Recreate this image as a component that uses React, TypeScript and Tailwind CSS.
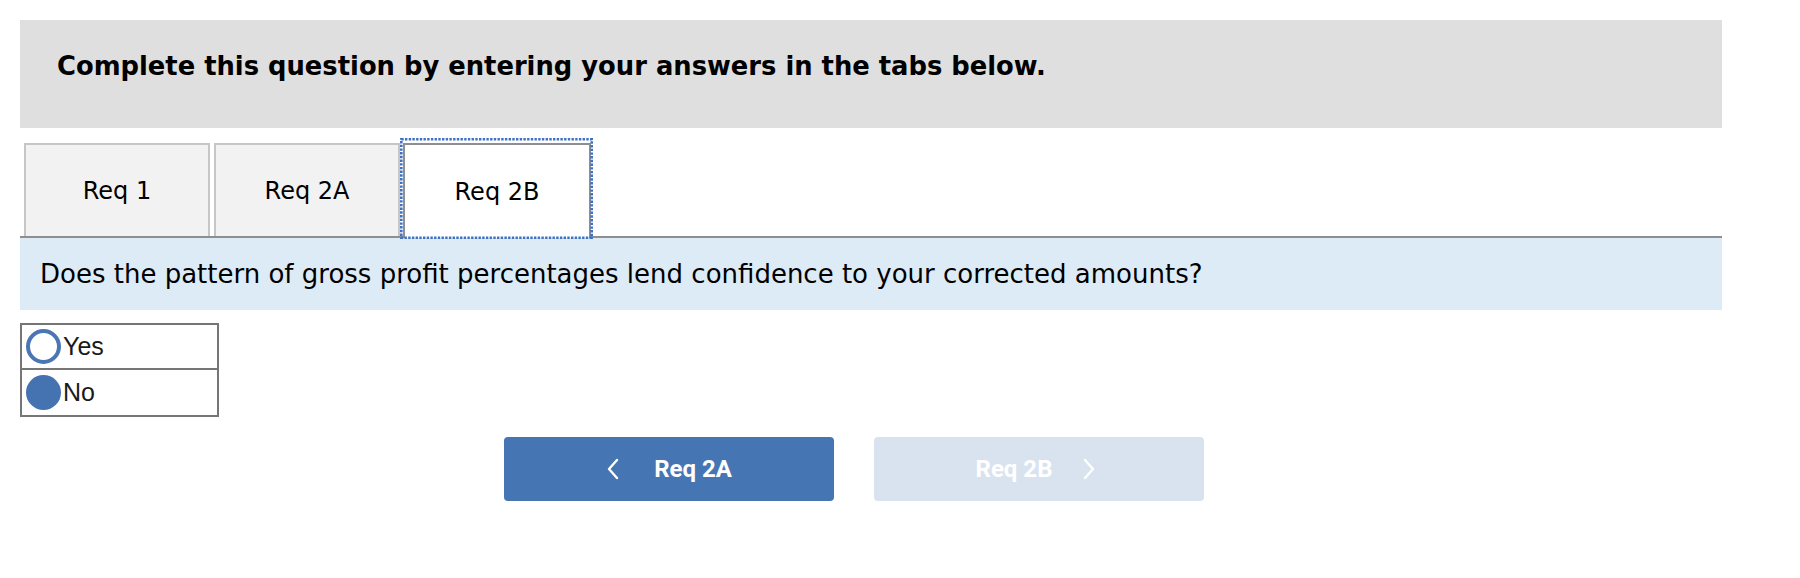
const tabs = [
  { label: "Req 1", active: false },
  { label: "Req 2A", active: false },
  { label: "Req 2B", active: true },
];

const ChevronLeft = () => (
  <svg width="14" height="24" viewBox="0 0 14 24" fill="none" stroke="currentColor" strokeWidth={2.4} strokeLinecap="round" strokeLinejoin="round">
    <path d="M11 3L3 12l8 9" />
  </svg>
);

const ChevronRight = () => (
  <svg width="14" height="24" viewBox="0 0 14 24" fill="none" stroke="currentColor" strokeWidth={2.4} strokeLinecap="round" strokeLinejoin="round">
    <path d="M3 3l8 9-8 9" />
  </svg>
);

// dotted focus ring around the selected tab
const FocusRing = () => (
  <svg className="absolute -left-[5px] -top-[7px] pointer-events-none" width="193" height="101">
    <rect x="1.3" y="1.3" width="190.4" height="98.4" fill="none" stroke="#3f70c2" strokeWidth={2.6} strokeDasharray="2.4 1.3" />
  </svg>
);

export default function App() {
  return (
    <div className="w-[1800px] h-[578px] bg-white pt-5 pl-5 font-['DejaVu_Sans',Verdana,sans-serif] text-black">
      <div className="w-[1702px]">
        <div className="h-[108px] bg-[#dfdfdf] pt-[31px] pl-[37px]">
          <h1 className="text-[25.8px] leading-[30px] font-bold">
            Complete this question by entering your answers in the tabs below.
          </h1>
        </div>

        <div className="mt-[15px] flex items-end h-[93px] pl-1">
          {tabs.map((t, i) =>
            t.active ? (
              <div
                key={t.label}
                className="ml-[3px] w-[188px] h-[95px] -mb-[2px] relative z-10 bg-white border-2 border-b-0 border-[#8f8f8f] flex items-center justify-center text-[24px]"
              >
                {t.label}
                <FocusRing />
              </div>
            ) : (
              <div
                key={t.label}
                className={`${i > 0 ? "ml-1" : ""} w-[186px] h-[93px] bg-[#f2f2f2] border-2 border-b-0 border-[#c6c6c6] flex items-center justify-center text-[24px]`}
              >
                {t.label}
              </div>
            )
          )}
        </div>

        <div className="border-t-2 border-[#8f8f8f] h-[74px] bg-[#ddebf7] flex items-center px-5">
          <p className="text-[26px]">
            Does the pattern of gross profit percentages lend confidence to your corrected amounts?
          </p>
        </div>

        <div className="mt-[13px] w-[199px] border-2 border-[#767676] font-['Liberation_Sans',Arial,sans-serif] text-[25px] text-[#1a1a1a]">
          <div className="h-[45px] flex items-center pl-1 border-b-2 border-[#767676]">
            <span className="w-[35px] h-[35px] rounded-full border-4 border-[#4a77b4] bg-white" />
            <span className="ml-[2px]">Yes</span>
          </div>
          <div className="h-[45px] flex items-center pl-1">
            <span className="w-[35px] h-[35px] rounded-full bg-[#4573b1]" />
            <span className="ml-[2px]">No</span>
          </div>
        </div>

        <div className="mt-5 ml-[484px] flex gap-10 font-['Roboto',sans-serif] font-bold text-[24px] text-white">
          <button className="w-[330px] h-16 rounded-[4px] bg-[#4576b3] flex items-center justify-center gap-[34px]">
            <ChevronLeft />
            <span>Req 2A</span>
          </button>
          <button className="w-[330px] h-16 rounded-[4px] bg-[#d9e3ef] flex items-center justify-center gap-[30px] pr-[6px]">
            <span>Req 2B</span>
            <ChevronRight />
          </button>
        </div>
      </div>
    </div>
  );
}
